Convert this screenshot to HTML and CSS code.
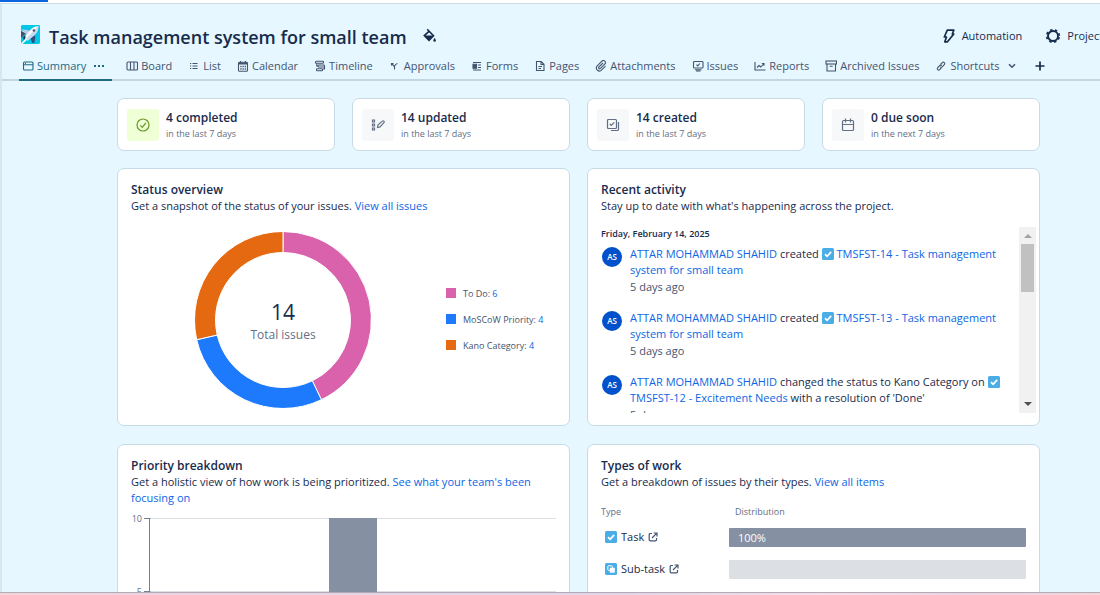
FILE: index.html
```html
<!DOCTYPE html>
<html lang="en">
<head>
<meta charset="utf-8">
<title>Task management system for small team</title>
<link rel="stylesheet" href="styles.css">
</head>
<body>
<svg class="defs" aria-hidden="true">
  <symbol id="task" viewBox="0 0 12 12"><rect width="12" height="12" rx="1.5" fill="#4bade8"/><path d="M3 6.2l2.1 2.1L9.2 3.9" fill="none" stroke="#fff" stroke-width="1.8"/></symbol>
  <symbol id="subtask" viewBox="0 0 12 12"><rect width="12" height="12" rx="1.5" fill="#4bade8"/><rect x="2.8" y="2.8" width="4.6" height="4.6" rx=".8" fill="none" stroke="#fff"/><rect x="4.8" y="4.8" width="5" height="5" rx=".8" fill="#fff"/></symbol>
  <symbol id="open" viewBox="0 0 10 10"><path d="M4 1.5H2.2a1 1 0 0 0-1 1v5.3a1 1 0 0 0 1 1h5.3a1 1 0 0 0 1-1V6M4 6l4.3-4.3M5.6 1h3.4v3.4" fill="none" stroke="currentColor" stroke-width="1.2"/></symbol>
</svg>
<div class="load"><div class="load-bar"></div></div>
<div class="page">
  <header>
    <div class="top">
      <svg class="logo" viewBox="0 0 20 20"><rect width="20" height="20" rx="1.5" fill="#00c7e5"/><path d="M0 5.5l6 2.5-6 6z" fill="#dff4fb"/><path d="M1 4.5l7 1 2 2-3.500 3.500z" fill="#b9c9e6"/><path d="M0 6l5 3-5 5z" fill="#42526e"/><path d="M9 12l4-3 2 4-1 6h-2z" fill="#344d7e"/><path d="M18.300 1.200c-4-.2-7 1.800-9.500 5L3.500 13l3.600 3.400 6.300-5.300c3.200-2.800 5-6 4.900-9.900z" fill="#f4f8fd"/><path d="M18.300 1.200c.2 4-1.600 7.200-4.900 10l-6.300 5.300-1.800-1.700z" fill="#c9d8ee"/><circle cx="13.600" cy="5.800" r="1.300" fill="#42526e"/><path d="M0 19.500L5 14l1.500 1.400L1.500 20z" fill="#fff"/><path d="M2 13l2-2 1 2-2 3z" fill="#253858"/></svg>
      <h1>Task management system for small team</h1>
      <button class="icon-btn" aria-label="Change background"><svg width="14" height="16" viewBox="0 0 14 16"><path d="M4.200 1.200L10.500 7.800 6 12.300 1.300 7.600 6.300 3.200" fill="none" stroke="currentColor" stroke-width="1.600"/><path d="M1.500 7.500h9L6 12.300z" fill="currentColor"/><path d="M11.600 10c.8 1.100 1.300 1.800 1.300 2.500a1.300 1.300 0 0 1-2.600 0c0-.7.500-1.400 1.300-2.500z" fill="currentColor"/></svg></button>
      <div class="actions">
        <button class="action"><svg width="14" height="16" viewBox="0 0 14 16"><path d="M5.300 2.200h6.500L10.300 6h1.500l-6.300 7.800H2.800L4.500 9H2.300z" fill="none" stroke="currentColor" stroke-width="1.700" stroke-linejoin="round"/></svg>Automation</button>
        <button class="action"><svg width="16" height="16" viewBox="0 0 16 16"><circle cx="8" cy="8" r="5" fill="none" stroke="currentColor" stroke-width="1.900"/><circle cx="8" cy="8" r="6.300" fill="none" stroke="currentColor" stroke-width="1.700" stroke-dasharray="2.400 2.548" stroke-dashoffset="-1.200"/></svg>Project settings</button>
      </div>
    </div>
    <nav>
      <div class="tab active"><a href="#"><svg viewBox="0 0 12 12"><rect x="1.500" y="2" width="9.500" height="8" rx="1"/><path d="M1.500 4.700H11M3 3.400h1"/></svg>Summary</a><button class="more" aria-label="More"><svg viewBox="0 0 12 12"><path d="M1 6h2M5 6h2M9 6h2" stroke-width="2"/></svg></button></div>
      <a class="tab" href="#"><svg viewBox="0 0 12 12"><rect x="1" y="2" width="10.500" height="8" rx="1"/><path d="M4.500 2v8M8 2v8"/></svg>Board</a>
      <a class="tab" href="#"><svg viewBox="0 0 12 12"><path d="M4.500 3.500H9.500M4.500 6H9.500M4.500 8.500H9.500M2 3.500h1.200M2 6h1.200M2 8.500h1.200"/></svg>List</a>
      <a class="tab" href="#"><svg viewBox="0 0 12 12"><rect x="1.500" y="2.200" width="9" height="9" rx="1"/><path d="M1.500 3.500h9" stroke-width="2"/><path d="M3.500 1v2M8.500 1v2"/><path d="M3.300 6.500h5.800M3.300 9h5.800" stroke-width="1.300" stroke-dasharray="1.300 .9"/></svg>Calendar</a>
      <a class="tab" href="#"><svg viewBox="0 0 12 12"><rect x="1.500" y="1.300" width="8" height="2" rx=".8"/><rect x="4" y="5" width="6.500" height="2" rx=".8"/><rect x="2.500" y="8.800" width="6" height="2" rx=".8"/><path d="M2.800 3.300V6H4M10.500 6.500v2.500H9"/></svg>Timeline</a>
      <a class="tab" href="#"><svg viewBox="0 0 12 12"><path d="M5.500 9.500V6.500L3 4M5.500 6.500Q6 4 8.500 3.500M2.500 5.500V3.500h2"/></svg>Approvals</a>
      <a class="tab" href="#"><svg viewBox="0 0 12 12"><path d="M2 2.500h8M7 5h3M7 7.500h3M2 10h8"/><path d="M2 4.300h3.500v4H2z" fill="currentColor"/></svg>Forms</a>
      <a class="tab" href="#"><svg viewBox="0 0 12 12"><path d="M2.500 1.500h4.700L10 4.300v6.200H2.500zM7 1.500v3h3M4.500 6.500h3.500M4.500 8.500h2.500"/></svg>Pages</a>
      <a class="tab" href="#"><svg viewBox="0 0 12 12"><path d="M8 3L3.800 7.200a1 1 0 0 0 1.400 1.400l4.600-4.500a2 2 0 0 0-2.900-2.900L2 6.200a3 3 0 0 0 4.200 4.200l4.300-4.300"/></svg>Attachments</a>
      <a class="tab" href="#"><svg viewBox="0 0 12 12"><rect x="1.500" y="1.500" width="9.500" height="6.500" rx=".8"/><path d="M4.500 4.700l1.200 1.200 2.200-2.400M3 9.700h6.500M4 11h4.500"/></svg>Issues</a>
      <a class="tab" href="#"><svg viewBox="0 0 12 12"><path d="M1 2v8h10.500M3 7.500l2-2 1.800 1.500L10 3.500M7.800 3.500H10v2.200"/></svg>Reports</a>
      <a class="tab" href="#"><svg viewBox="0 0 12 12"><rect x="1" y="1" width="10.500" height="3"/><path d="M2 4v7h8.500V4M4.700 6.300h3"/></svg>Archived Issues</a>
      <a class="tab" href="#"><svg viewBox="0 0 12 12"><path d="M5.500 4.500l1.800-1.800a1.400 1.400 0 0 1 2 2L7.200 6.800a1.400 1.400 0 0 1-2 0M6.800 5.500a1.400 1.400 0 0 0-2 0L2.700 7.600a1.400 1.400 0 0 0 2 2l1.600-1.600"/></svg>Shortcuts<svg class="chev" viewBox="0 0 12 12"><path d="M3 4.200l3 3 3-3" stroke-width="1.600"/></svg></a>
      <button class="tab add" aria-label="Add"><svg viewBox="0 0 12 12"><path d="M6 1.500v9M1.500 6h9" stroke-width="1.700"/></svg></button>
    </nav>
  </header>
  <main>
    <section class="stats">
      <div class="card stat"><span class="tile green"><svg viewBox="0 0 16 16"><circle cx="8" cy="8" r="6"/><path d="M5.300 8.300l2 2 3.500-4.300"/></svg></span><div><h3>4 completed</h3><p>in the last 7 days</p></div></div>
      <div class="card stat"><span class="tile"><svg viewBox="0 0 16 16"><path d="M2.500 3h2v2h-2zM2.500 7h2v2h-2zM2.500 11h2v2h-2zM7.500 10.500l.6-2.600 4.200-3.800a1 1 0 0 1 1.600 1.600L10 9.900z"/></svg></span><div><h3>14 updated</h3><p>in the last 7 days</p></div></div>
      <div class="card stat"><span class="tile"><svg viewBox="0 0 16 16"><rect x="2.500" y="2.500" width="9" height="9" rx="1"/><path d="M4.800 7l1.500 1.500 3-3.200M13.500 5v7.500a1 1 0 0 1-1 1H6"/></svg></span><div><h3>14 created</h3><p>in the last 7 days</p></div></div>
      <div class="card stat"><span class="tile"><svg viewBox="0 0 16 16"><rect x="2.500" y="3.500" width="11" height="10" rx="1"/><path d="M2.500 7.500h11M5.500 1.500v4M10.500 1.500v4"/></svg></span><div><h3>0 due soon</h3><p>in the next 7 days</p></div></div>
    </section>
    <section class="panels">
      <article class="card panel">
        <h2>Status overview</h2>
        <p>Get a snapshot of the status of your issues. <a href="#">View all issues</a></p>
        <div class="status">
          <svg class="donut" viewBox="-88 -88 176 176">
            <g stroke="#fff" stroke-width="1">
              <path d="M0-88.500A88.500 88.500 0 0 1 38.400 79.700L29.300 60.800A67.500 67.500 0 0 0 0-67.500z" fill="#da62ac"/>
              <path d="M38.400 79.700A88.500 88.500 0 0 1-86.300 19.700L-65.800 15A67.500 67.500 0 0 0 29.300 60.800z" fill="#1d7afc"/>
              <path d="M-86.300 19.700A88.500 88.500 0 0 1 0-88.500V-67.500A67.500 67.500 0 0 0-65.800 15z" fill="#e56910"/>
            </g>
            <text class="total" y="0">14</text>
            <text class="total-label" y="19">Total issues</text>
          </svg>
          <ul class="legend">
            <li><i class="pink"></i>To Do: <a href="#">6</a></li>
            <li><i class="blue"></i>MoSCoW Priority: <a href="#">4</a></li>
            <li><i class="orange"></i>Kano Category: <a href="#">4</a></li>
          </ul>
        </div>
      </article>
      <article class="card panel">
        <h2>Recent activity</h2>
        <p>Stay up to date with what's happening across the project.</p>
        <div class="activity">
          <div class="feed">
            <h4>Friday, February 14, 2025</h4>
            <div class="event"><span class="avatar">AS</span><div><a href="#">ATTAR MOHAMMAD SHAHID</a> created <svg class="type"><use href="#task"/></svg> <a href="#">TMSFST-14 - Task management system for small team</a><time>5 days ago</time></div></div>
            <div class="event"><span class="avatar">AS</span><div><a href="#">ATTAR MOHAMMAD SHAHID</a> created <svg class="type"><use href="#task"/></svg> <a href="#">TMSFST-13 - Task management system for small team</a><time>5 days ago</time></div></div>
            <div class="event"><span class="avatar">AS</span><div><a href="#">ATTAR MOHAMMAD SHAHID</a> changed the status to Kano Category on <svg class="type"><use href="#task"/></svg> <a href="#">TMSFST-12 - Excitement Needs</a> with a resolution of 'Done'<time>5 days ago</time></div></div>
          </div>
          <div class="scroll" aria-hidden="true"><i class="up"></i><i class="thumb"></i><i class="down"></i></div>
        </div>
      </article>
      <article class="card panel">
        <h2>Priority breakdown</h2>
        <p>Get a holistic view of how work is being prioritized. <a href="#">See what your team's been focusing on</a></p>
        <svg class="chart" viewBox="0 0 425 170">
          <path d="M19 10.500H425M19 83.500H425M19 156.500H425" stroke="#dcdfe4"/>
          <path d="M13 10.500h6.500M13 83.500h6.500M13 156.500h6.500M18.500 10.500v147" stroke="#758195" fill="none"/>
          <rect x="198" y="10" width="48" height="147" fill="#8590a2"/>
          <text x="11" y="14">10</text><text x="11" y="87">5</text><text x="11" y="160">0</text>
        </svg>
      </article>
      <article class="card panel">
        <h2>Types of work</h2>
        <p>Get a breakdown of issues by their types. <a href="#">View all items</a></p>
        <table>
          <thead><tr><th class="type-col">Type</th><th class="dist">Distribution</th></tr></thead>
          <tbody>
            <tr><td><span class="kind"><svg class="type"><use href="#task"/></svg>Task<svg class="ext"><use href="#open"/></svg></span></td><td><div class="bar full">100%</div></td></tr>
            <tr><td><span class="kind"><svg class="type"><use href="#subtask"/></svg>Sub-task<svg class="ext"><use href="#open"/></svg></span></td><td><div class="bar"></div></td></tr>
          </tbody>
        </table>
      </article>
    </section>
  </main>
</div>
<div class="edge"></div>
</body>
</html>
```
FILE: styles.css
```css
* { box-sizing: border-box; }
body {
  margin: 0;
  height: 100vh;
  display: flex;
  flex-direction: column;
  overflow: hidden;
  background: #fff;
  color: #172b4d;
  font: 11px/16px "Open Sans", "Noto Sans", sans-serif;
}
.defs { display: none; }
h1, h2, h3, h4, p, ul { margin: 0; padding: 0; }
a { color: #0c66e4; text-decoration: none; font-weight: 500; }
button { border: 0; padding: 0; background: none; color: inherit; font: inherit; }
.load { height: 3px; flex: none; }
.load-bar { width: 48px; height: 2px; background: #0c66e4; }
.page {
  flex: 1;
  min-height: 0;
  overflow: hidden;
  background: #e6f7ff;
  border-left: 2px solid #d7e6f0;
  border-top: 1px solid #ccdbe5;
}
.edge {
  flex: none;
  height: 3px;
  border-top: 1px solid #b3aab8;
  background: linear-gradient(90deg, #f3d5d8, #ecd3e2 18%, #e0d5e6 40%, #e0d5e6 55%, #f5dde8 75%, #ecd3e2 88%, #f3d5d8);
}
.top {
  display: flex;
  align-items: center;
  height: 48px;
  padding: 16px 0 0 19px;
  white-space: nowrap;
}
.logo { width: 19px; height: 19px; margin: 0 9px 3px 0; flex: none; }
h1 { font-size: 18px; line-height: 28px; font-weight: 600; padding-top: 1px; }
.icon-btn { display: flex; margin-left: 16px; }
.actions { display: flex; gap: 23px; margin-left: auto; margin-right: -46px; }
.action { display: flex; align-items: center; gap: 6px; font-weight: 500; }
nav {
  display: flex;
  align-items: stretch;
  gap: 16px;
  height: 29px;
  padding-left: 17px;
  border-bottom: 2px solid #c3d5e1;
  color: #44546f;
  white-space: nowrap;
}
.tab, .tab a { display: flex; align-items: center; gap: 3px; color: inherit; font-weight: 500; }
nav svg { width: 12px; height: 12px; fill: none; stroke: currentColor; stroke-width: 1.1; flex: none; }
.active { color: #206b84; padding: 0 7px 0 3px; gap: 7px; border-bottom: 2px solid #206b84; margin: 0 -2px -2px 0; }
.more { display: flex; }
.chev { margin-left: 4px; }
.add { color: #172b4d; }
main { padding: 17px 60px 0 115px; }
.card { background: #fff; border: 1px solid #c7dae5; border-radius: 7px; }
.stats { display: grid; grid-template-columns: repeat(4, 1fr); gap: 17px; }
.stat { display: flex; gap: 7px; padding: 9px; height: 53px; align-items: center; }
.tile {
  width: 32px;
  height: 32px;
  display: grid;
  place-items: center;
  border-radius: 3px;
  background: #f7f8f9;
  color: #626f86;
}
.tile svg { width: 16px; height: 16px; fill: none; stroke: currentColor; stroke-width: 1.2; }
.green { background: #efffd6; color: #6a9a23; }
h2, h3 { font-size: 12px; line-height: 16px; font-weight: 600; }
.stat div { padding-top: 2px; }
.stat p { font-size: 9px; color: #626f86; }
.panels { display: grid; grid-template-columns: 1fr 1fr; gap: 18px 17px; margin-top: 17px; }
.panel { padding: 13px 13px 12px; min-height: 258px; }
.status { display: flex; align-items: center; gap: 75px; margin: 18px 0 0 64px; }
.donut { width: 176px; height: 176px; flex: none; }
.donut text { text-anchor: middle; }
.total { font-size: 21px; fill: #172b4d; }
.total-label { font-size: 12px; fill: #626f86; }
.legend { list-style: none; display: flex; flex-direction: column; gap: 10px; font-size: 9px; color: #44546f; white-space: pre; }
.legend a { font-weight: 400; }
.legend i { display: inline-block; width: 10px; height: 10px; margin-right: 7px; vertical-align: -1px; }
.pink { background: #da62ac; }
.blue { background: #1d7afc; }
.orange { background: #e56910; }
.activity { display: flex; height: 186px; margin: 13px -10px 0 0; }
.feed { flex: 1; overflow: hidden; padding-right: 16px; }
h4 { font-size: 9px; line-height: 14px; font-weight: 600; }
.event { display: flex; gap: 8px; padding: 5px 0 10px 1px; }
.avatar {
  width: 20px;
  height: 20px;
  flex: none;
  margin-top: 1px;
  border-radius: 50%;
  background: #0052cc;
  color: #fff;
  font-size: 8px;
  font-weight: 600;
  line-height: 20px;
  text-align: center;
}
.type { width: 12px; height: 12px; vertical-align: -2px; }
time { display: block; margin-top: 1px; color: #44546f; }
.scroll { display: flex; flex-direction: column; align-items: center; width: 17px; background: #f1f1f1; padding: 7px 0; }
.up, .down { border: 4px solid transparent; }
.up { border-top: 0; border-bottom-color: #a3a3a3; margin-bottom: 6px; }
.down { border-bottom: 0; border-top-color: #505050; margin-top: auto; }
.thumb { width: 13px; height: 48px; background: #c1c1c1; }
.chart { display: block; width: 100%; margin-top: 2px; }
.chart text { font-size: 9px; fill: #626f86; text-anchor: end; }
table { width: 100%; margin-top: 14px; border-collapse: collapse; }
th { padding: 0 0 1px; text-align: left; font-size: 9px; font-weight: 500; color: #626f86; }
th.type-col { width: 128px; }
th.dist { padding-left: 6px; }
td { padding: 0; height: 32px; }
.kind { display: flex; align-items: center; gap: 4px; padding-left: 4px; }
.ext { width: 10px; height: 10px; color: #44546f; }
.bar { height: 19px; padding-left: 9px; line-height: 19px; border-radius: 1px; background: #dcdfe4; color: #fff; }
.full { background: #8590a2; }
```
